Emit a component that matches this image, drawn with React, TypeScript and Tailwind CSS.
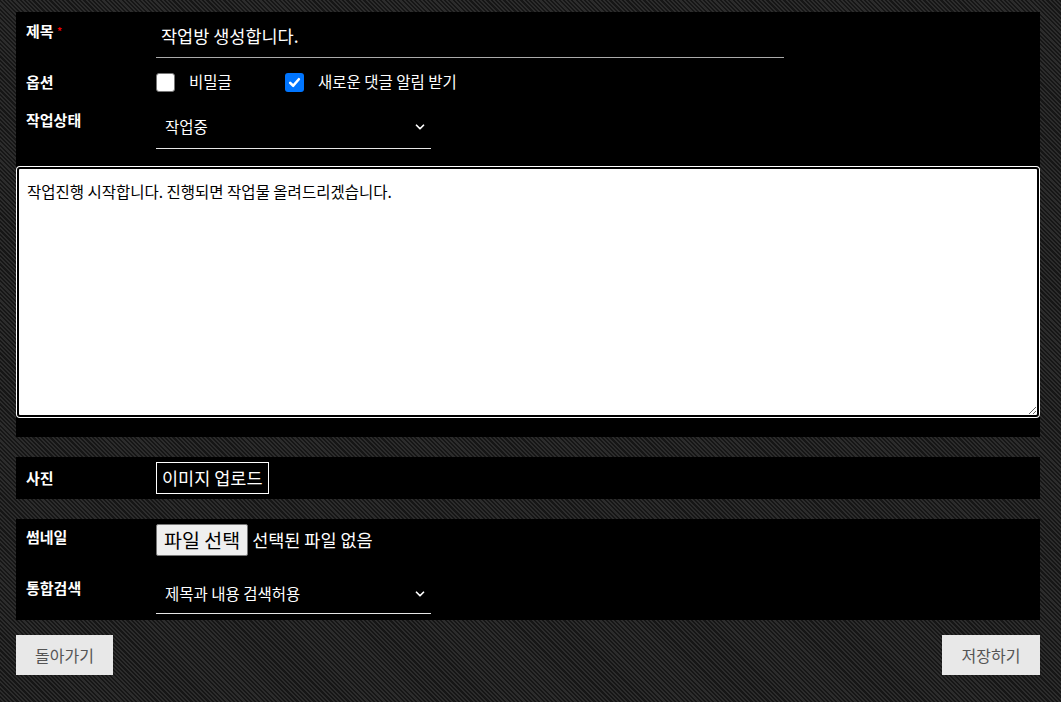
import { ChevronDown } from "lucide-react";

const font = { fontFamily: '"Noto Sans CJK KR", "Noto Sans", sans-serif' };

function Label({ children, className = "" }: { children: React.ReactNode; className?: string }) {
  return (
    <div className={`w-[140px] shrink-0 pl-[10px] text-[15px] leading-[20px] font-bold text-white ${className}`}>
      {children}
    </div>
  );
}

function Check({ checked }: { checked?: boolean }) {
  if (checked) {
    return (
      <span className="w-[19px] h-[19px] rounded-[3px] bg-[#0075ff] flex items-center justify-center">
        <svg width="13" height="13" viewBox="0 0 12 12">
          <path d="M2 6.3 L4.8 9 L10 3" fill="none" stroke="white" strokeWidth="2.4" strokeLinecap="round" strokeLinejoin="round" />
        </svg>
      </span>
    );
  }
  return <span className="w-[19px] h-[19px] rounded-[3px] bg-white border border-[#767676]" />;
}

function Select({ value, className = "" }: { value: string; className?: string }) {
  return (
    <div className={`w-[275px] h-[40px] border-b border-[#e6e6e6] flex items-center justify-between pl-[9px] pr-[4px] text-[15.5px] text-white ${className}`}>
      <span>{value}</span>
      <ChevronDown size={14} strokeWidth={3} />
    </div>
  );
}

export default function App() {
  return (
    <div
      className="min-h-screen pt-3 pl-4 bg-[repeating-linear-gradient(45deg,#161616_0px,#161616_1.5px,#2c2c2c_1.5px,#2c2c2c_3px)]"
      style={font}
    >
      <div className="w-[1024px]">
        {/* 기본 정보 + 본문 */}
        <div className="bg-black pt-[4px] pb-[20px]">
          <div className="flex h-[50px]">
            <Label className="pt-[5px]">
              제목 <span className="text-[#e00] text-[10px] align-top">*</span>
            </Label>
            <div className="w-[628px] h-[42px] border-b border-[#aaa] flex items-center pl-[5px] text-[17.5px] text-white">
              작업방 생성합니다.
            </div>
          </div>
          <div className="flex h-[32px] items-center">
            <Label>옵션</Label>
            <div className="flex items-center text-[15.5px] text-white">
              <Check />
              <span className="ml-[14px] w-[96px]">비밀글</span>
              <Check checked />
              <span className="ml-[14px]">새로운 댓글 알림 받기</span>
            </div>
          </div>
          <div className="flex">
            <Label className="pt-[12px]">작업상태</Label>
            <Select value="작업중" className="mt-[8px] h-[43px]" />
          </div>
          <textarea
            className="block mt-[18px] ml-px w-[1022px] h-[250px] bg-white border-2 border-black rounded-[3px] ring-1 ring-white px-[8px] pt-[11px] text-[15.5px] leading-[22px] text-black outline-none resize-y"
            defaultValue="작업진행 시작합니다. 진행되면 작업물 올려드리겠습니다."
          />
        </div>

        {/* 사진 */}
        <div className="bg-black mt-[20px] h-[42px] flex items-center">
          <Label>사진</Label>
          <div className="h-[32px] border border-white px-[5px] flex items-center text-[17.5px] text-white">
            이미지 업로드
          </div>
        </div>

        {/* 썸네일 / 통합검색 */}
        <div className="bg-black mt-[20px] pt-[5px] pb-[6px]">
          <div className="flex">
            <Label className="pt-[3px]">썸네일</Label>
            <div className="flex items-center">
              <span className="h-[32px] px-[7px] flex items-center bg-[#efefef] border border-[#767676] rounded-[2px] text-[19.5px] text-black">
                파일 선택
              </span>
              <span className="ml-[4px] text-[17.5px] text-white">선택된 파일 없음</span>
            </div>
          </div>
          <div className="flex">
            <Label className="pt-[22px]">통합검색</Label>
            <Select value="제목과 내용 검색허용" className="mt-[18px]" />
          </div>
        </div>

        {/* 버튼 */}
        <div className="mt-[15px] flex justify-between">
          <button className="w-[97px] h-[40px] bg-[#e8e8e8] text-[16px] text-[#555]">돌아가기</button>
          <button className="w-[98px] h-[40px] bg-[#e8e8e8] text-[16px] text-[#555]">저장하기</button>
        </div>
      </div>
    </div>
  );
}
